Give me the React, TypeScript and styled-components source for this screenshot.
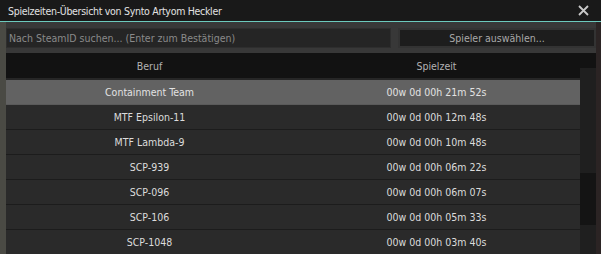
import React from "react";
import styled, { createGlobalStyle } from "styled-components";

const Global = createGlobalStyle`
  html, body { margin: 0; padding: 0; background: #2a2424; }
  * { box-sizing: border-box; }
`;

const FONT = `"DejaVu Sans Condensed", "DejaVu Sans", sans-serif`;

const Window = styled.div`
  width: 601px;
  height: 254px;
  display: flex;
  flex-direction: column;
  overflow: hidden;
  font-family: ${FONT};
  font-size: 10.5px;
  background: #383838;
`;

const TitleBar = styled.div`
  height: 22px;
  flex: none;
  display: flex;
  align-items: center;
  justify-content: space-between;
  padding: 0 12px 0 8px;
  background: #191919;
  border-bottom: 1px solid #6cc9bd;
  color: #e2e2e2;
  font-size: 10.5px;
  letter-spacing: -0.3px;
`;

const Close = styled.button`
  width: 11px;
  height: 11px;
  padding: 0;
  border: 0;
  background: none;
  display: flex;
  cursor: pointer;
`;

const Body = styled.div`
  flex: 1;
  min-height: 0;
  display: flex;
  flex-direction: column;
  gap: 5px;
  padding: 6px 0 0 0;
  border-left: 6px solid #4a4a44;
  border-right: 5px solid #2b2424;
`;

const Toolbar = styled.div`
  display: flex;
  gap: 7px;
  height: 20px;
  flex: none;
`;

const Search = styled.input`
  flex: 1;
  min-width: 0;
  height: 20px;
  background: #252525;
  border: 1px solid #2e2e2e;
  padding: 0 2px;
  font-family: ${FONT};
  font-size: 10.5px;
  color: #cfcfcf;
  outline: none;
  &::placeholder { color: #8a8a8a; }
`;

const Button = styled.button`
  width: 198px;
  height: 20px;
  background: #1d1d1d;
  border: 2px solid #333333;
  color: #a9a9a9;
  font-family: ${FONT};
  font-size: 10.5px;
  padding: 0;
`;

const Table = styled.div`
  position: relative;
  flex: 1;
  min-height: 0;
  display: flex;
  flex-direction: column;
  background: #262626;
`;

const HeaderRow = styled.div`
  height: 25px;
  flex: none;
  display: grid;
  grid-template-columns: 287px 287px 16px;
  align-items: center;
  background: #121212;
  color: #b2b2b2;
  margin-bottom: 2px;
`;

const Cell = styled.div`
  text-align: center;
  white-space: nowrap;
`;

const Rows = styled.div`
  width: 574px;
  display: flex;
  flex-direction: column;
`;

const Row = styled.div<{ $selected?: boolean }>`
  height: 25px;
  flex: none;
  display: grid;
  grid-template-columns: 287px 287px;
  align-items: center;
  background: ${(p) => (p.$selected ? "#626262" : "#2a2a2a")};
  color: ${(p) => (p.$selected ? "#e2e2e2" : "#dcdcdc")};
  border-bottom: 1px solid ${(p) => (p.$selected ? "#5a5a5a" : "#1c1c1c")};
`;

const ScrollTrack = styled.div`
  position: absolute;
  left: 574px;
  top: 15px;
  bottom: 0;
  width: 16px;
  background: #1f1f1f;
`;

const ScrollGrip = styled.div`
  position: absolute;
  left: 0;
  right: 0;
  top: 105px;
  height: 52px;
  background: #141414;
`;

const data: [string, string][] = [
  ["Containment Team", "00w 0d 00h 21m 52s"],
  ["MTF Epsilon-11", "00w 0d 00h 12m 48s"],
  ["MTF Lambda-9", "00w 0d 00h 10m 48s"],
  ["SCP-939", "00w 0d 00h 06m 22s"],
  ["SCP-096", "00w 0d 00h 06m 07s"],
  ["SCP-106", "00w 0d 00h 05m 33s"],
  ["SCP-1048", "00w 0d 00h 03m 40s"],
];

export default function App() {
  return (
    <>
      <Global />
      <Window>
        <TitleBar>
          <span>Spielzeiten-Übersicht von Synto Artyom Heckler</span>
          <Close aria-label="Schließen">
            <svg width="11" height="11" viewBox="0 0 11 11">
              <path d="M1 1 L10 10 M10 1 L1 10" stroke="#c8c8c8" strokeWidth="1.8" />
            </svg>
          </Close>
        </TitleBar>
        <Body>
          <Toolbar>
            <Search placeholder="Nach SteamID suchen... (Enter zum Bestätigen)" />
            <Button>Spieler auswählen...</Button>
          </Toolbar>
          <Table>
            <HeaderRow>
              <Cell>Beruf</Cell>
              <Cell>Spielzeit</Cell>
            </HeaderRow>
            <Rows>
              {data.map(([job, time], i) => (
                <Row key={job} $selected={i === 0}>
                  <Cell>{job}</Cell>
                  <Cell>{time}</Cell>
                </Row>
              ))}
            </Rows>
            <ScrollTrack>
              <ScrollGrip />
            </ScrollTrack>
          </Table>
        </Body>
      </Window>
    </>
  );
}
